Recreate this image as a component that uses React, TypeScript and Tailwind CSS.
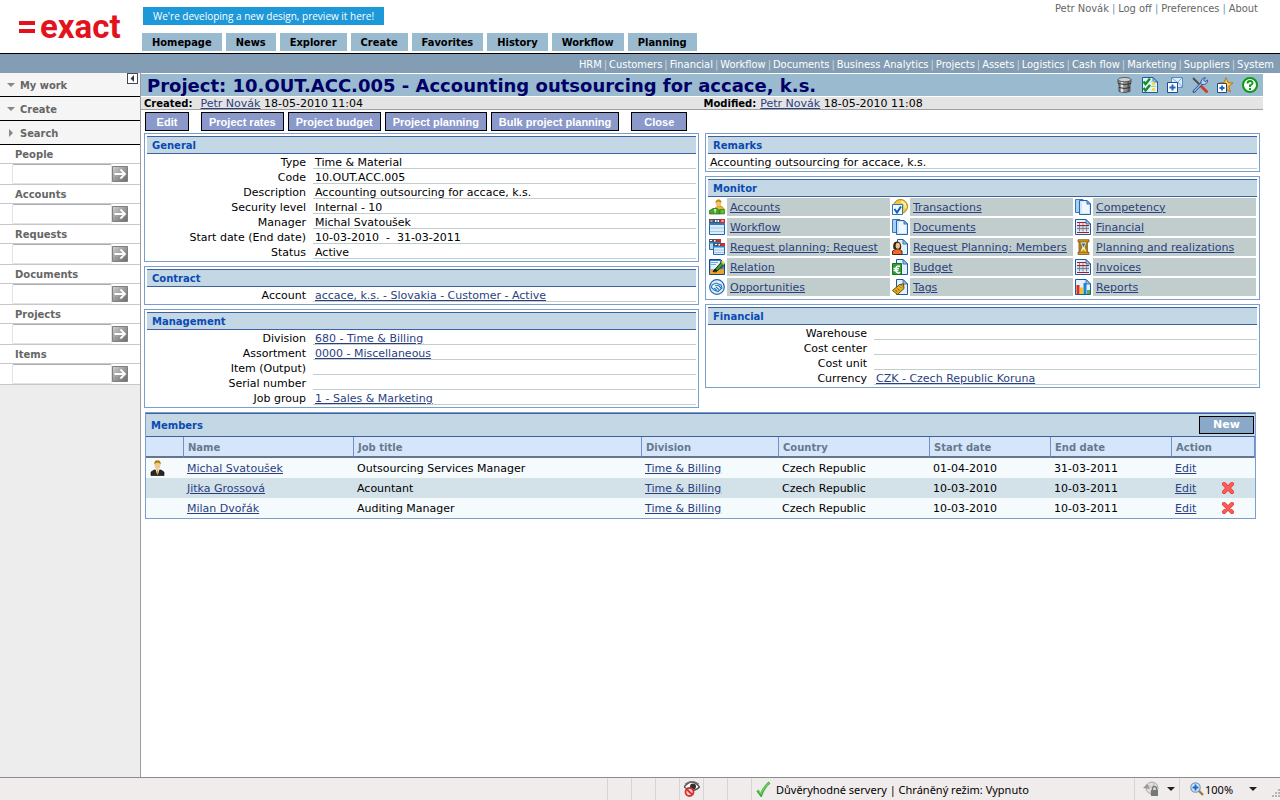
import React from 'react';

const tabs = ['Homepage', 'News', 'Explorer', 'Create', 'Favorites', 'History', 'Workflow', 'Planning'];

const modules = [
  'HRM', 'Customers', 'Financial', 'Workflow', 'Documents', 'Business Analytics', 'Projects',
  'Assets', 'Logistics', 'Cash flow', 'Marketing', 'Suppliers', 'System',
];

const searches = ['People', 'Accounts', 'Requests', 'Documents', 'Projects', 'Items'];

const monitorLinks = [
  { label: 'Accounts', icon: 'accounts' },
  { label: 'Transactions', icon: 'transactions' },
  { label: 'Competency', icon: 'documents' },
  { label: 'Workflow', icon: 'workflow' },
  { label: 'Documents', icon: 'documents' },
  { label: 'Financial', icon: 'sheet' },
  { label: 'Request planning: Request', icon: 'windows' },
  { label: 'Request Planning: Members', icon: 'member' },
  { label: 'Planning and realizations', icon: 'hourglass' },
  { label: 'Relation', icon: 'relation' },
  { label: 'Budget', icon: 'budget' },
  { label: 'Invoices', icon: 'sheet' },
  { label: 'Opportunities', icon: 'opportunities' },
  { label: 'Tags', icon: 'tags' },
  { label: 'Reports', icon: 'reports' },
];

const members = [
  { name: 'Michal Svatoušek', job: 'Outsourcing Services Manager', start: '01-04-2010', end: '31-03-2011', manager: true },
  { name: 'Jitka Grossová', job: 'Acountant', start: '10-03-2010', end: '10-03-2011', manager: false },
  { name: 'Milan Dvořák', job: 'Auditing Manager', start: '10-03-2010', end: '10-03-2011', manager: false },
];

function Sheet({ x = 2 }: { x?: number }) {
  return (
    <>
      <path d={`M${x} .5h${11 - x}l4.500 4.500v10.500h-${15.5 - x}z`} fill="#e4f1fc" stroke="#1c5c9c" />
      <path d="M11 .5v4.500h4.500z" fill="#9cc8ee" stroke="#1c5c9c" strokeWidth=".8" />
    </>
  );
}

function MonitorIcon({ name }: { name: string }) {
  return (
    <svg viewBox="0 0 16 16" className="h-4 w-4 shrink-0" aria-hidden="true">
      {name === 'accounts' && (
        <>
          <path d="M6 9l3-2h3l3 2.500V14H8z" fill="#f0b820" stroke="#a87400" strokeWidth=".7" />
          <path d="M.5 15v-3.500L4 9.500h4l3 2V15z" fill="#45a52c" stroke="#1f6f16" strokeWidth=".7" />
          <path d="M11 10.500h4.500V15H11z" fill="#58bd3c" stroke="#1f6f16" strokeWidth=".6" />
          <ellipse cx="9.500" cy="4" rx="2.800" ry="3.500" fill="#f0c080" />
          <path d="M6.500 4Q6.500.3 9.700.4q3 .2 2.700 3.600Q11 2.500 9 2.800 7.500 3 6.500 4z" fill="#c89000" />
          <path d="M5 10l1 5 1.500-5z" fill="#d8f0c8" />
        </>
      )}
      {name === 'transactions' && (
        <>
          <circle cx="8.500" cy="7.500" r="7" fill="#f0c840" stroke="#a87c10" />
          <path d="M9 2.500q5 1 4.500 7" fill="none" stroke="#fff0a0" strokeWidth="2" />
          <path d="M.5 5.500h10v10H.5z" fill="#f4faff" stroke="#2878c8" />
          <path d="M2.500 10l2.500 3.500 4-6" fill="none" stroke="#1460b8" strokeWidth="2" />
        </>
      )}
      {name === 'documents' && (
        <>
          <path d="M.5.5H8V13.500H.5z" fill="#a4d0f4" stroke="#3878b4" />
          <path d="M4.500 1.500H12l3.500 3.500v10.500h-11z" fill="#cfe6fa" stroke="#2868a8" />
          <path d="M7 3h4v3h3v8H7z" fill="#eef7ff" />
          <path d="M12 1.500V5h3.500z" fill="#80b8e8" stroke="#1c5c9c" strokeWidth=".7" />
        </>
      )}
      {name === 'workflow' && (
        <>
          <path d="M.5.5h15v15H.5z" fill="#dcecf9" stroke="#2468b4" />
          <path d="M0 0h16v4H0z" fill="#4c5464" />
          <path d="M0 4h16v2H0z" fill="#2e7cc8" />
          <path d="M1 9h14M1 12.500h14" stroke="#a0c8ea" />
          <path d="M1.500 1.500h2v1h-2zM6 1h1.500v2H6zM8.500 1H10v2H8.500z" fill="#fff" />
          <path d="M11 0h5v4h-5z" fill="#d82828" />
          <path d="M12.500 1l2 2m0-2l-2 2" stroke="#fff" strokeWidth=".8" />
        </>
      )}
      {name === 'windows' && (
        <>
          <path d="M.5.5h11v10H.5z" fill="#b4d6f2" stroke="#2468b4" />
          <path d="M0 0h12v3H0z" fill="#4c5464" />
          <path d="M0 3h12v1.500H0z" fill="#2e7cc8" />
          <path d="M1 1h2v1H1zM5 1h1.500v1.500H5z" fill="#fff" />
          <path d="M8 0h4v3H8z" fill="#d82828" />
          <path d="M4.500 4.500h11v11h-11z" fill="#dcecf9" stroke="#2468b4" />
          <path d="M4 4h12v3H4z" fill="#4c5464" />
          <path d="M4 7h12v1.500H4z" fill="#2e7cc8" />
          <path d="M5 11h10M5 13.500h10" stroke="#a0c8ea" />
          <path d="M6 5h2v1H6zM9.500 5H11v1.500H9.500z" fill="#fff" />
          <path d="M12 4h4v3h-4z" fill="#d82828" />
        </>
      )}
      {name === 'sheet' && (
        <>
          <Sheet x={0.5} />
          <path d="M2 7h12v4.500H2z" fill="#ccd4e0" />
          <path d="M2 9.500h12M4.500 4v8.500M8 4v8.500M11.500 6v6.500" stroke="#6c7484" strokeWidth=".8" />
          <path d="M2 3.500h9M2 6.500h12M2 13.500h12" stroke="#a81c28" strokeWidth="1.200" />
        </>
      )}
      {name === 'member' && (
        <>
          <Sheet x={5.5} />
          <path d="M.5 15.500V12L4 10h3l3 2v3.500z" fill="#f06828" stroke="#401808" strokeWidth=".9" />
          <path d="M1.500 10Q0 2.500 5 2.500T9 10z" fill="#382008" />
          <ellipse cx="5.800" cy="6.800" rx="2.200" ry="3" fill="#f0c090" />
        </>
      )}
      {name === 'hourglass' && (
        <>
          <path d="M3.500 2h9.500v12H3.500z" fill="#a07820" />
          <path d="M5 2.500h7L9.500 8l2.500 6H5l2.500-6z" fill="#f8f0c0" />
          <path d="M6.500 4.500h4L8.500 8z" fill="#2868b8" />
          <path d="M6 13l2.500-3L11 13z" fill="#e0a018" />
          <path d="M3 .7h11v2.300H3zM3 13.200h11v2.300H3z" fill="#d89820" stroke="#704808" strokeWidth=".7" />
        </>
      )}
      {name === 'relation' && (
        <>
          <path d="M.5.5h11l4 4v11H.5z" fill="#3c80cc" stroke="#184a88" />
          <path d="M1.500 2h9.500v8.500H1.500z" fill="#e8f4ff" />
          <path d="M1 10.500l6 1 8-2V15H1z" fill="#f0a028" />
          <path d="M2 3.500h7M2 5.500h5" stroke="#70a8dc" />
          <path d="M4 12.500L12.500 3 15 5.500 7 13z" fill="#38a030" stroke="#102808" strokeWidth=".9" />
          <path d="M4 12.500L6 9.500l2.500 2.300z" fill="#181818" />
          <path d="M12 3l1.500-1.500L16 4l-1.500 2z" fill="#f0d040" />
        </>
      )}
      {name === 'budget' && (
        <>
          <Sheet x={4.5} />
          <path d="M.5 4.500h9v11h-9z" fill="#2f9e34" stroke="#187020" />
          <path d="M8 7.500q-3-1.500-4 1.500t1 4.500 3-.5M1.500 9.500H7M1.500 11.500h5" fill="none" stroke="#fff" strokeWidth="1.500" />
        </>
      )}
      {name === 'opportunities' && (
        <>
          <circle cx="8" cy="8" r="7.300" fill="#e0effb" stroke="#1c68ac" strokeWidth="1.200" />
          <path d="M3 6l4-2 5 2 1 3-4 3.500L5 11 2.500 8.500z" fill="#f8fcff" stroke="#2878b8" strokeWidth="1.100" />
          <path d="M6 7q2-1.500 4 0l2 2M5 9l3 2.500M7 8l3 2.500" fill="none" stroke="#2878b8" strokeWidth="1.100" />
        </>
      )}
      {name === 'tags' && (
        <>
          <Sheet x={4.5} />
          <path d="M.5 11.500l7-6 4-.5.500 4.500-6.500 6z" fill="#e8b020" stroke="#6c4800" />
          <circle cx="9" cy="7.500" r="1" fill="#fff" stroke="#6c4800" strokeWidth=".6" />
          <path d="M3.500 11l2 2M5.500 9.500l2 2" stroke="#6c4800" strokeWidth=".9" />
        </>
      )}
      {name === 'reports' && (
        <>
          <Sheet x={0.5} />
          <path d="M1.500 6h3v9h-3z" fill="#e82818" />
          <path d="M5 8.500h3V15H5z" fill="#f4c818" />
          <path d="M8.500 4h3v11h-3z" fill="#2080e0" />
          <path d="M12 11h3v4h-3z" fill="#48b838" />
        </>
      )}
    </svg>
  );
}

function TitleIcon({ name }: { name: string }) {
  return (
    <svg viewBox="0 0 16 16" className="h-4 w-4" aria-hidden="true">
      {name === 'database' && (
        <>
          <path d="M1 2.500h13V6l-1 1v7.500q-5.500 2-11 0V7L1 6z" fill="#8c8c8c" stroke="#383838" strokeWidth=".8" />
          <path d="M5 4v11" stroke="#e4e4e4" strokeWidth="2.400" />
          <path d="M11.500 4v11" stroke="#585858" strokeWidth="2" />
          <path d="M1 6.500q6.500 2 13 0M2 10.500q5.500 2 11 0" fill="none" stroke="#303030" />
          <ellipse cx="7.500" cy="2.600" rx="6.500" ry="2.100" fill="#d0d0d0" stroke="#484848" strokeWidth=".8" />
        </>
      )}
      {name === 'checklist' && (
        <>
          <Sheet x={0.5} />
          <path d="M1.500 4.500l2 2.500 4.500-5.500M1.500 11l2 2.500L8 8" fill="none" stroke="#169020" strokeWidth="2.400" />
          <path d="M9 4.500h3M9 9.500h5" stroke="#a0c8e8" />
          <circle cx="11.500" cy="7" r="1.800" fill="#f4e030" />
          <circle cx="11.500" cy="12.500" r="1.800" fill="#f4e030" />
        </>
      )}
      {name === 'mail' && (
        <>
          <path d="M4.500.5h11v10h-11z" fill="#dcecfa" stroke="#5c8cc4" />
          <path d="M5 1l5.500 4.500L15 1M15 10l-4-5" fill="none" stroke="#6898cc" strokeWidth=".8" />
          <path d="M.5 5.500h10v10H.5z" fill="#fff" stroke="#1c4c94" />
          <path d="M5.500 7.500v6M2.500 10.500h6" stroke="#1c68c4" strokeWidth="2" />
        </>
      )}
      {name === 'tools' && (
        <>
          <path d="M1 1l8 8" stroke="#504848" strokeWidth="1.800" />
          <path d="M9.500 9.500l5 5" stroke="#d04020" strokeWidth="3" strokeLinecap="round" />
          <path d="M10 6L2 14.500" stroke="#2c5090" strokeWidth="2.800" strokeLinecap="round" />
          <path d="M10 6L2 14.500" stroke="#98bce4" strokeWidth="1.200" />
          <path d="M9 6.500Q8.500 1 13.500.7L11.500 3l1.500 1.700L15.700 3Q15.500 8 10 7.500z" fill="#b8d4f0" stroke="#2c5090" strokeWidth=".9" />
        </>
      )}
      {name === 'favorite' && (
        <>
          <path d="M9 .5l2 5 5 .5-4 3.500 1.500 5.500L9 12l-5 3 1.500-5.500L1.500 6l5.500-.5z" fill="#f8b020" stroke="#b86c10" strokeWidth=".8" />
          <path d="M9 2.500l1.500 4 3 .5L9 9z" fill="#fce060" />
          <path d="M.5 6.500h9v9h-9z" fill="#fff" stroke="#1c4c94" />
          <path d="M5 8.500v5M2.500 11h5" stroke="#1c68c4" strokeWidth="1.800" />
        </>
      )}
      {name === 'help' && (
        <>
          <circle cx="8" cy="8" r="7" fill="#fff" stroke="#0a9a14" strokeWidth="2" />
          <path d="M5.500 6.500q0-2.500 2.600-2.500t2.400 2.300Q10.300 7.500 8 8.300V10M8 11v2" fill="none" stroke="#0a9a14" strokeWidth="1.900" />
        </>
      )}
    </svg>
  );
}

function Panel({ title, children }: { title: string; children: React.ReactNode }) {
  return (
    <section className="border border-[#7b9fcd] p-[2px]">
      <h2 className="flex h-[18px] items-center border-y border-[#4060a0] bg-[#c3d7e5] pl-[5px] text-[10px] font-bold text-[#0a4ab4]">
        {title}
      </h2>
      {children}
    </section>
  );
}

function Field({ label, value, link }: { label: string; value?: string; link?: boolean }) {
  return (
    <div className="flex h-[15px] leading-[18px]">
      <dt className="w-[166px] shrink-0 pr-[7px] text-right whitespace-nowrap">{label}</dt>
      <dd className="flex-1 border-b border-[#c0cfcd] pl-[2px] whitespace-pre">
        {link ? <a href="#" className="text-[#2b3f80] underline">{value}</a> : value}
      </dd>
    </div>
  );
}

function ToolButton({ children, className = '' }: { children: string; className?: string }) {
  return (
    <button
      className={`h-[19px] border border-black bg-[#8a99c9] px-[7px] font-['Liberation_Sans',Arial,sans-serif] text-[11px] leading-[16px] font-bold text-white ${className}`}
    >
      {children}
    </button>
  );
}

function SideHeading({ label, open }: { label: string; open: boolean }) {
  return (
    <button className="flex h-6 w-full items-center border-b border-black bg-[#f5f5f5] pt-px pl-[6px] text-left font-['DejaVu_Sans_Condensed','Tahoma',sans-serif] text-[11px] font-bold text-[#666]">
      <svg viewBox="0 0 10 10" className="mr-1 h-[10px] w-[10px]" aria-hidden="true">
        <path d={open ? 'M1 3h8L5 7z' : 'M3 1v8l4-4z'} fill="#888" />
      </svg>
      {label}
    </button>
  );
}

function Header() {
  return (
    <header className="font-['DejaVu_Sans_Condensed','Tahoma',sans-serif] text-[11px]">
      <div className="flex h-[54px] border-b border-black">
        <a href="#" className="flex w-[142px] items-center pl-[19px] text-[#e2131c]" aria-label="exact">
          <svg viewBox="0 0 16 12" className="mt-px h-3 w-4" aria-hidden="true">
            <path d="M0 0h16v4H0zM0 8h16v4H0z" fill="currentColor" />
          </svg>
          <span className="ml-[5px] font-['Roboto',sans-serif] text-[33px] leading-[44px] font-bold">exact</span>
        </a>
        <div className="flex flex-1 flex-col items-start pt-[7px]">
          <a href="#" className="ml-px flex h-[18px] items-center bg-[#1d98d9] px-[10px] font-['Open_Sans',sans-serif] text-[10px] text-white">
            We're developing a new design, preview it here!
          </a>
          <nav className="mt-2 flex gap-1">
            {tabs.map(tab => (
              <a key={tab} href="#" className="flex h-[18px] items-center bg-[#9abad0] px-[10px] pt-px font-bold text-black">{tab}</a>
            ))}
          </nav>
        </div>
        <nav className="flex gap-[3px] pt-px pr-[22px] text-[#666]">
          {['Petr Novák', 'Log off', 'Preferences', 'About'].map((item, i) => (
            <React.Fragment key={item}>
              {i > 0 && <span className="text-[#6699b8]">|</span>}
              <a href="#">{item}</a>
            </React.Fragment>
          ))}
        </nav>
      </div>
      <nav className="flex h-[19px] items-center justify-end gap-[2px] bg-[#839eb4] pt-px pr-[6px] text-white">
        {modules.map((item, i) => (
          <React.Fragment key={item}>
            {i > 0 && <span className="text-[#cfd6da]">|</span>}
            <a href="#">{item}</a>
          </React.Fragment>
        ))}
      </nav>
    </header>
  );
}

function Sidebar() {
  return (
    <aside className="relative w-[141px] shrink-0 border-r border-[#a09a9c] bg-[#ededed]">
      <SideHeading label="My work" open />
      <SideHeading label="Create" open />
      <SideHeading label="Search" open={false} />
      <button aria-label="Collapse" className="absolute top-0 right-[2px] h-[11px] w-[11px] border border-[#404858] bg-white">
        <svg viewBox="0 0 9 9" className="h-[9px] w-[9px]" aria-hidden="true">
          <path d="M6 1v7L2.500 4.500z" fill="#303848" />
        </svg>
      </button>
      {searches.map(item => (
        <form key={item} onSubmit={e => e.preventDefault()} className="h-10 bg-white">
          <label htmlFor={item} className="block h-[19px] border-b border-[#c8c8c8] pl-[15px] text-[10px] leading-[19px] font-bold text-[#666]">{item}</label>
          <div className="flex h-[21px] border-b border-[#c8c8c8] pl-3">
            <input id={item} type="text" className="h-5 w-[100px] rounded-[2px] border border-[#e2e3ea] border-t-[#abadb3] bg-white px-1" />
            <button aria-label={`Search ${item}`} className="mt-[2px] h-4 w-4">
              <svg viewBox="0 0 16 16" className="h-4 w-4" aria-hidden="true">
                <defs>
                  <linearGradient id={`go-${item}`} x1="0" y1="0" x2="1" y2="1">
                    <stop offset="0" stopColor="#d0d0d0" />
                    <stop offset="1" stopColor="#686868" />
                  </linearGradient>
                </defs>
                <path d="M.5.5h15v15H.5z" fill={`url(#go-${item})`} stroke="#808080" />
                <path d="M2.500 8h10M8.500 3.500L13 8l-4.500 4.500" fill="none" stroke="#fff" strokeWidth="1.800" />
              </svg>
            </button>
          </div>
        </form>
      ))}
    </aside>
  );
}

function MembersTable() {
  const columns = ['', 'Name', 'Job title', 'Division', 'Country', 'Start date', 'End date', 'Action'];
  return (
    <section className="mt-1 mr-1 ml-px border border-[#7b9fcd]">
      <div className="flex h-6 items-center justify-between border-y border-[#4060a0] bg-[#c3d7e5] pr-px pl-[5px]">
        <h2 className="text-[10px] font-bold text-[#0a4ab4]">Members</h2>
        <button className="h-[18px] w-[55px] border border-black bg-[#8aa9c8] text-[11px] leading-[16px] font-bold text-white">New</button>
      </div>
      <table className="w-full table-fixed border-separate border-spacing-0">
        <colgroup>
          <col className="w-[38px]" />
          <col className="w-[170px]" />
          <col />
          <col className="w-[137px]" />
          <col className="w-[151px]" />
          <col className="w-[121px]" />
          <col className="w-[121px]" />
          <col className="w-[83px]" />
        </colgroup>
        <thead>
          <tr>
            {columns.map(column => (
              <th key={column} className="h-[21px] border-r border-b-2 border-r-[#6f93c8] border-b-[#66748c] bg-[#d5e6fb] p-0 pt-[2px] pl-1 text-left text-[10px] font-bold text-[#66798c]">
                {column}
              </th>
            ))}
          </tr>
        </thead>
        <tbody>
          {members.map(member => (
            <tr key={member.name} className="h-5 odd:bg-[#f5fafd] even:bg-[#d3e1e9]">
              <td className="p-0 pl-1">
                {member.manager && (
                  <svg viewBox="0 0 16 16" className="h-4 w-4" aria-label="Manager">
                    <path d="M1 15.500v-3.500l3-2h7l3 2v3.500z" fill="#282828" stroke="#000" strokeWidth=".6" />
                    <path d="M5.500 9.500h4l-2 5.500z" fill="#f8f8f8" />
                    <path d="M7 10h1.200l.3 3-1 1.500-1-1.500z" fill="#e0a020" />
                    <ellipse cx="7.500" cy="5" rx="2.900" ry="4" fill="#f0c890" />
                    <path d="M4.300 4.500Q4 .3 7.500.3t3.200 4.200Q9.500 2.500 7.500 2.700 5.500 2.500 4.300 4.500z" fill="#b08010" />
                  </svg>
                )}
              </td>
              <td className="p-0 pl-[3px]"><a href="#" className="text-[#2b3f80] underline">{member.name}</a></td>
              <td className="p-0 pl-[3px]">{member.job}</td>
              <td className="p-0 pl-[3px]"><a href="#" className="text-[#2b3f80] underline">Time &amp; Billing</a></td>
              <td className="p-0 pl-[3px]">Czech Republic</td>
              <td className="p-0 pl-[3px]">{member.start}</td>
              <td className="p-0 pl-[3px]">{member.end}</td>
              <td className="p-0 pl-[3px]">
                <div className="flex items-center justify-between pr-5">
                  <a href="#" className="text-[#2b3f80] underline">Edit</a>
                  {!member.manager && (
                    <button aria-label={`Delete ${member.name}`}>
                      <svg viewBox="0 0 14 14" className="h-[14px] w-[14px]" aria-hidden="true">
                        <path d="M3 3l8 8M11 3l-8 8" stroke="#d83434" strokeWidth="4" strokeLinecap="round" />
                        <path d="M3 3l8 8M11 3l-8 8" stroke="#ff5c58" strokeWidth="2.800" strokeLinecap="round" />
                      </svg>
                    </button>
                  )}
                </div>
              </td>
            </tr>
          ))}
        </tbody>
      </table>
    </section>
  );
}

function Caret() {
  return (
    <svg viewBox="0 0 8 4" className="h-1 w-2" aria-hidden="true">
      <path d="M0 0h8L4 4z" fill="#202020" />
    </svg>
  );
}

function StatusBar() {
  return (
    <footer className="flex h-[23px] items-stretch border-t border-[#8c8c8c] bg-[#f0ecec] font-['Noto_Sans',sans-serif] text-[11px] text-black">
      <div className="flex-1" />
      <div className="w-6 border-l border-[#d8d4d4]" />
      <div className="w-6 border-l border-[#d8d4d4]" />
      <div className="w-6 border-l border-[#d8d4d4]" />
      <div className="flex w-6 items-center border-l border-[#d8d4d4] pl-1">
        <svg viewBox="0 0 16 16" className="h-4 w-4" aria-hidden="true">
          <path d="M0 6q8-10 15.500 0-7 7-15.500 0z" fill="#fff" stroke="#505050" strokeWidth="1.300" />
          <path d="M1 3q7-5 14 0" fill="none" stroke="#707070" />
          <circle cx="9" cy="5.500" r="3" fill="#303030" />
          <circle cx="5.500" cy="11" r="4" fill="#f0d8d8" stroke="#d83030" strokeWidth="1.800" />
          <path d="M3 8.500l5 5" stroke="#d83030" strokeWidth="1.800" />
        </svg>
      </div>
      <div className="w-6 border-l border-[#d8d4d4]" />
      <div className="w-6 border-l border-[#d8d4d4]" />
      <div className="flex w-[383px] items-center gap-1 border-l border-[#d8d4d4] pl-1 whitespace-nowrap">
        <svg viewBox="0 0 16 16" className="h-4 w-4" aria-hidden="true">
          <path d="M1.500 9.500l3.500 4.500Q8 6 13.500 1.500" fill="none" stroke="#38a838" strokeWidth="2.800" />
          <path d="M2.500 10l2.500 2.500Q8 6 13 2" fill="none" stroke="#70d860" strokeWidth="1.400" />
        </svg>
        Důvěryhodné servery | Chráněný režim: Vypnuto
      </div>
      <div className="flex w-[45px] items-center gap-2 border-l border-[#d8d4d4] pl-2">
        <svg viewBox="0 0 16 16" className="h-4 w-4" aria-hidden="true">
          <circle cx="9" cy="7" r="6" fill="#e0dede" stroke="#a8a8a8" />
          <path d="M4 4l6 3 1-6M10 7l-3 5" fill="none" stroke="#b8b8b8" />
          <path d="M0 7l4-4 3 5z" fill="#989898" />
          <path d="M8 9h7v6H8z" fill="#787878" />
          <path d="M9.500 9V7.500q0-2 2-2t2 2V9" fill="none" stroke="#787878" strokeWidth="1.300" />
        </svg>
        <Caret />
      </div>
      <div className="flex w-[101px] items-center border-l border-[#d8d4d4] pl-[10px]">
        <svg viewBox="0 0 14 14" className="mr-px h-[14px] w-[14px]" aria-hidden="true">
          <path d="M8.500 8.500l4.500 4.500" stroke="#a07848" strokeWidth="2.400" />
          <circle cx="5.500" cy="5.500" r="4.700" fill="#d8ecfc" stroke="#7898b8" strokeWidth="1.200" />
          <path d="M5.500 2.500v6M2.500 5.500h6" stroke="#1868d0" strokeWidth="2" />
        </svg>
        <span className="mr-4">100%</span>
        <Caret />
        <svg viewBox="0 0 8 8" className="mt-2 ml-auto h-2 w-2" aria-hidden="true">
          <path d="M6 0h2v2H6zM3 3h2v2H3zM6 3h2v2H6zM0 6h2v2H0zM3 6h2v2H3zM6 6h2v2H6z" fill="#b8b4b4" />
        </svg>
      </div>
    </footer>
  );
}

export default function App() {
  return (
    <div className="flex min-h-screen flex-col bg-white font-['DejaVu_Sans','Verdana',sans-serif] text-[11px] leading-[15px] text-black">
      <Header />
      <div className="flex flex-1">
        <Sidebar />
        <main className="min-w-0 flex-1 pt-px pr-[17px]">
          <div className="flex h-[22px] items-center justify-between bg-[#9abad0] pr-[5px] pl-[6px]">
            <h1 className="pt-px text-[18px] leading-[22px] font-bold whitespace-nowrap text-[#000066]">
              Project: 10.OUT.ACC.005 - Accounting outsourcing for accace, k.s.
            </h1>
            <div className="flex gap-[9px]">
              {['database', 'checklist', 'mail', 'tools', 'favorite', 'help'].map(name => (
                <button key={name} aria-label={name}><TitleIcon name={name} /></button>
              ))}
            </div>
          </div>
          <div className="mt-px flex h-[13px] items-center border-b border-[#a0a0a0] bg-[#e4e4e4] pl-[3px]">
            <div className="w-1/2">
              <b className="text-[10px]">Created:</b>
              <a href="#" className="ml-2 text-[#2b3f80] underline">Petr Novák</a> 18-05-2010 11:04
            </div>
            <div className="w-1/2">
              <b className="text-[10px]">Modified:</b>
              <a href="#" className="ml-1 text-[#2b3f80] underline">Petr Novák</a> 18-05-2010 11:08
            </div>
          </div>
          <div className="flex gap-1 pt-[2px] pl-1">
            <ToolButton className="mr-2 w-11">Edit</ToolButton>
            <ToolButton>Project rates</ToolButton>
            <ToolButton>Project budget</ToolButton>
            <ToolButton>Project planning</ToolButton>
            <ToolButton>Bulk project planning</ToolButton>
            <ToolButton className="ml-2 w-14">Close</ToolButton>
          </div>
          <div className="px-[3px] pt-[2px]">
            <div className="flex gap-[6px]">
              <div className="flex flex-1 flex-col gap-1">
                <Panel title="General">
                  <dl>
                    <Field label="Type" value="Time & Material" />
                    <Field label="Code" value="10.OUT.ACC.005" />
                    <Field label="Description" value="Accounting outsourcing for accace, k.s." />
                    <Field label="Security level" value="Internal - 10" />
                    <Field label="Manager" value="Michal Svatoušek" />
                    <Field label="Start date (End date)" value="10-03-2010  -  31-03-2011" />
                    <Field label="Status" value="Active" />
                  </dl>
                </Panel>
                <Panel title="Contract">
                  <dl>
                    <Field label="Account" value="accace, k.s. - Slovakia - Customer - Active" link />
                  </dl>
                </Panel>
                <Panel title="Management">
                  <dl>
                    <Field label="Division" value="680 - Time & Billing" link />
                    <Field label="Assortment" value="0000 - Miscellaneous" link />
                    <Field label="Item (Output)" />
                    <Field label="Serial number" />
                    <Field label="Job group" value="1 - Sales & Marketing" link />
                  </dl>
                </Panel>
              </div>
              <div className="flex flex-1 flex-col gap-1">
                <Panel title="Remarks">
                  <p className="h-[15px] border-b border-[#c0cfcd] pl-[2px] leading-[18px]">Accounting outsourcing for accace, k.s.</p>
                </Panel>
                <Panel title="Monitor">
                  <ul className="grid grid-cols-3 gap-y-[2px] pt-px pb-px">
                    {monitorLinks.map(link => (
                      <li key={link.label} className="flex h-[18px] items-center gap-[2px] px-px">
                        <MonitorIcon name={link.icon} />
                        <a href="#" className="flex h-[18px] flex-1 items-center bg-[#c0cdcc] pl-[3px] whitespace-nowrap text-[#2b3f80] underline">
                          {link.label}
                        </a>
                      </li>
                    ))}
                  </ul>
                </Panel>
                <Panel title="Financial">
                  <dl>
                    <Field label="Warehouse" />
                    <Field label="Cost center" />
                    <Field label="Cost unit" />
                    <Field label="Currency" value="CZK - Czech Republic Koruna" link />
                  </dl>
                </Panel>
              </div>
            </div>
            <MembersTable />
          </div>
        </main>
      </div>
      <StatusBar />
    </div>
  );
}
